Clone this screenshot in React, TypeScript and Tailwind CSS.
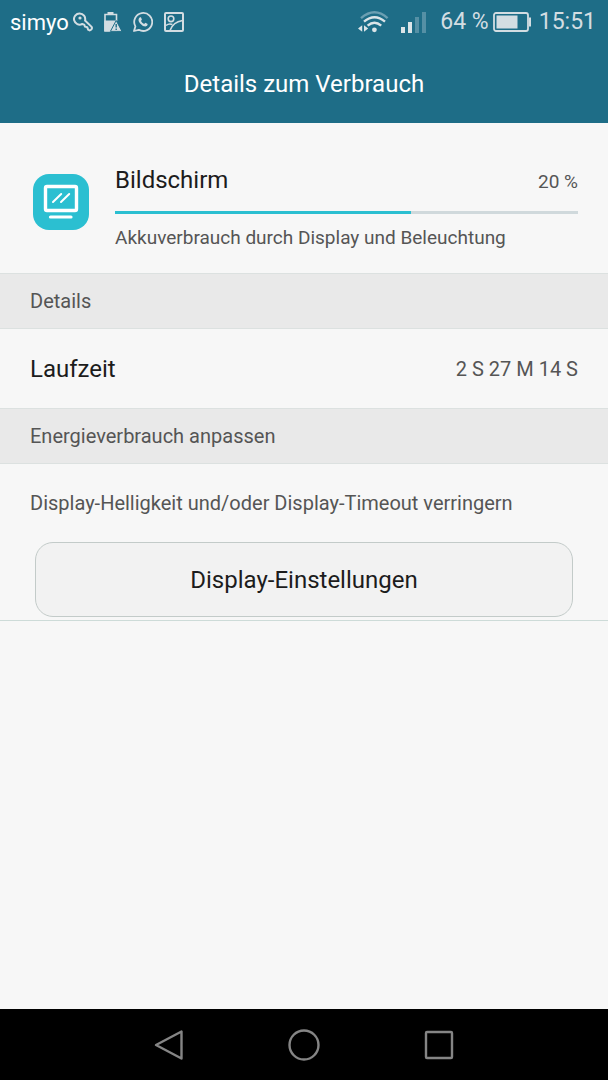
import type { ReactNode } from 'react';

const KeyIcon = () => (
  <svg width="20" height="20" viewBox="0 0 20 20" fill="none" stroke="#d3dde2" strokeWidth="2" strokeLinejoin="round">
    <path d="M12 8.5L18.400 14.600Q19.600 16.200 18.200 17.600Q16.800 19 15.200 17.800L14.200 15.200L12 14.600L11.200 12.600L9.200 12A5.600 5.600 0 1 1 12 8.500Z" />
    <circle cx="7" cy="6" r="1.600" fill="#d3dde2" stroke="none" />
  </svg>
);

const BatteryAlertIcon = () => (
  <svg width="18" height="20" viewBox="0 0 18 20">
    <path d="M3.500 0h6v2h-6z" fill="#d3dde2" />
    <path d="M1 19V2.500h11.500V9" fill="none" stroke="#d3dde2" strokeWidth="1.600" />
    <path d="M0.200 8.500H13V19.800H0.200z" fill="#d3dde2" />
    <path d="M12.200 8.500L18 19.400H6.400z" fill="#d3dde2" stroke="#1e6d87" strokeWidth="1" strokeLinejoin="round" />
    <path d="M12.200 12v3.600M12.200 16.600v1.400" stroke="#1e6d87" strokeWidth="1.400" />
  </svg>
);

const WhatsAppIcon = () => (
  <svg width="20" height="20" viewBox="0 0 20 20" fill="none" stroke="#d3dde2" strokeWidth="1.800" strokeLinejoin="round">
    <path d="M1 19L2.400 14.400A9 9 0 1 1 5.800 17.800Z" />
    <path
      d="M6.900 5.300h1l1 2.300-.9 1.300q1 2 3.100 3l1.300-1.100 2.300 1.100q0 2.300-2.300 2.700Q9.500 14.500 6.900 11.300 4.100 7.600 6.900 5.300Z"
      fill="#d3dde2"
      stroke="none"
    />
  </svg>
);

const PictureIcon = () => (
  <svg width="20" height="20" viewBox="0 0 20 20" fill="none" stroke="#d3dde2" strokeWidth="2">
    <rect x="1" y="1" width="18" height="18" rx="1" />
    <circle cx="7" cy="6.800" r="2.800" strokeWidth="1.600" />
    <path d="M2 13.500Q5 11 8.400 12.500M6 18.500Q9 10 18.500 8.500" strokeWidth="1.600" />
  </svg>
);

const WifiIcon = () => (
  <svg width="31" height="22" viewBox="0 0 31 22" fill="none" strokeWidth="2.400">
    <path d="M3 7.200Q16.500 -4.500 29.600 7.200" stroke="#6b9fb2" />
    <path d="M6 10.600Q16.500 1.800 27 10.600M9.600 14.600Q16.500 8.800 23.200 14.600" stroke="#dce5e8" />
    <circle cx="16.400" cy="18.800" r="2.400" fill="#dce5e8" />
    <path d="M4.200 14.200v6.600L0 17.500zM6 14.200v6.600l4.200-3.300z" fill="#dce5e8" />
  </svg>
);

const SignalIcon = () => (
  <svg width="25" height="21" viewBox="0 0 25 21">
    <path d="M0 15h4v6H0zM7 10h4v11H7z" fill="#dce5e8" />
    <path d="M14 5h4v16h-4zM21 0h4v21h-4z" fill="#5590a5" />
  </svg>
);

const BatteryIcon = () => (
  <svg width="38" height="20" viewBox="0 0 38 20">
    <rect x="1" y="1" width="34" height="18" rx="2" fill="none" stroke="#d3dde2" strokeWidth="1.800" />
    <path d="M36 5.500h2v9h-2z" fill="#d3dde2" />
    <path d="M3.500 3.500h21v13h-21z" fill="#d3dde2" />
  </svg>
);

const ScreenIcon = () => (
  <svg width="56" height="56" viewBox="0 0 56 56" fill="none" stroke="#fff" strokeLinecap="round">
    <rect x="12.500" y="12.500" width="31" height="24" rx="1.500" strokeWidth="3.400" />
    <path d="M17.500 43H38" strokeWidth="3.200" />
    <path d="M20 28L28.200 20M28 28L36.200 20" strokeWidth="2" />
  </svg>
);

const SectionHeader = ({ children }: { children: ReactNode }) => (
  <h2 className="flex h-14 items-center border-y border-[#dce1e0] bg-[#e9e9e9] px-[30px] text-xl text-[#555]">
    {children}
  </h2>
);

const StatusBar = () => (
  <div className="flex h-11 items-center justify-between pr-3 pl-[10px] text-[23px] text-[#d3dde2]">
    <div className="flex items-center">
      <span className="mr-1 text-[22px] text-white">simyo</span>
      <div className="flex items-center gap-[11px]">
        <KeyIcon />
        <BatteryAlertIcon />
        <WhatsAppIcon />
        <PictureIcon />
      </div>
    </div>
    <div className="flex items-center">
      <WifiIcon />
      <span className="mr-[14px] ml-3"><SignalIcon /></span>
      <span className="mr-1">64 %</span>
      <BatteryIcon />
      <span className="ml-2">15:51</span>
    </div>
  </div>
);

const NavBar = () => (
  <nav className="flex h-[71px] shrink-0 items-center justify-center gap-[103px] bg-black text-[#858585]">
    <button aria-label="Zurück">
      <svg width="32" height="32" viewBox="0 0 32 32" fill="none" stroke="currentColor" strokeWidth="2.400" strokeLinejoin="round">
        <path d="M28.500 2.500V29.500L3 16Z" />
      </svg>
    </button>
    <button aria-label="Startseite">
      <svg width="32" height="32" viewBox="0 0 32 32" fill="none" stroke="currentColor" strokeWidth="2.400">
        <circle cx="16" cy="16" r="14.500" />
      </svg>
    </button>
    <button aria-label="Übersicht">
      <svg width="32" height="32" viewBox="0 0 32 32" fill="none" stroke="currentColor" strokeWidth="2.400">
        <rect x="3" y="3" width="26" height="26" rx="1" />
      </svg>
    </button>
  </nav>
);

export default function App() {
  const usage = 64;

  return (
    <div className="flex min-h-screen flex-col bg-[#f7f7f7] font-[Roboto,sans-serif] text-[#1c1c1c]">
      <header className="bg-[#1e6d87]">
        <StatusBar />
        <h1 className="flex h-[79px] items-center justify-center text-2xl text-white">Details zum Verbrauch</h1>
      </header>

      <main className="flex-1">
        <section className="flex h-[150px] items-center gap-[26px] pt-2 pr-[30px] pl-[33px]">
          <div className="shrink-0 rounded-2xl bg-[#2bbfd1]">
            <ScreenIcon />
          </div>
          <div className="flex-1 pt-3">
            <div className="flex items-baseline justify-between">
              <span className="text-2xl">Bildschirm</span>
              <span className="text-[19px] text-[#555]">20 %</span>
            </div>
            <div
              role="progressbar"
              aria-label="Bildschirm"
              aria-valuenow={usage}
              className="mt-[14px] h-[3px] bg-[#d0d9dc]"
            >
              <div className="h-full bg-[#2bbfd1]" style={{ width: `${usage}%` }} />
            </div>
            <p className="mt-[10px] text-[19px] leading-7 text-[#555]">Akkuverbrauch durch Display und Beleuchtung</p>
          </div>
        </section>

        <SectionHeader>Details</SectionHeader>
        <div className="flex h-[79px] items-center justify-between px-[30px]">
          <span className="text-2xl">Laufzeit</span>
          <span className="text-xl text-[#555]">2 S 27 M 14 S</span>
        </div>

        <SectionHeader>Energieverbrauch anpassen</SectionHeader>
        <section className="border-b border-[#cddbd8] pb-[3px]">
          <p className="px-[30px] py-6 text-xl leading-[30px] text-[#555]">
            Display-Helligkeit und/oder Display-Timeout verringern
          </p>
          <div className="px-[35px]">
            <button className="h-[75px] w-full rounded-[18px] border border-[#c3cbc9] bg-[#f2f2f2] text-2xl">
              Display-Einstellungen
            </button>
          </div>
        </section>
      </main>

      <NavBar />
    </div>
  );
}
